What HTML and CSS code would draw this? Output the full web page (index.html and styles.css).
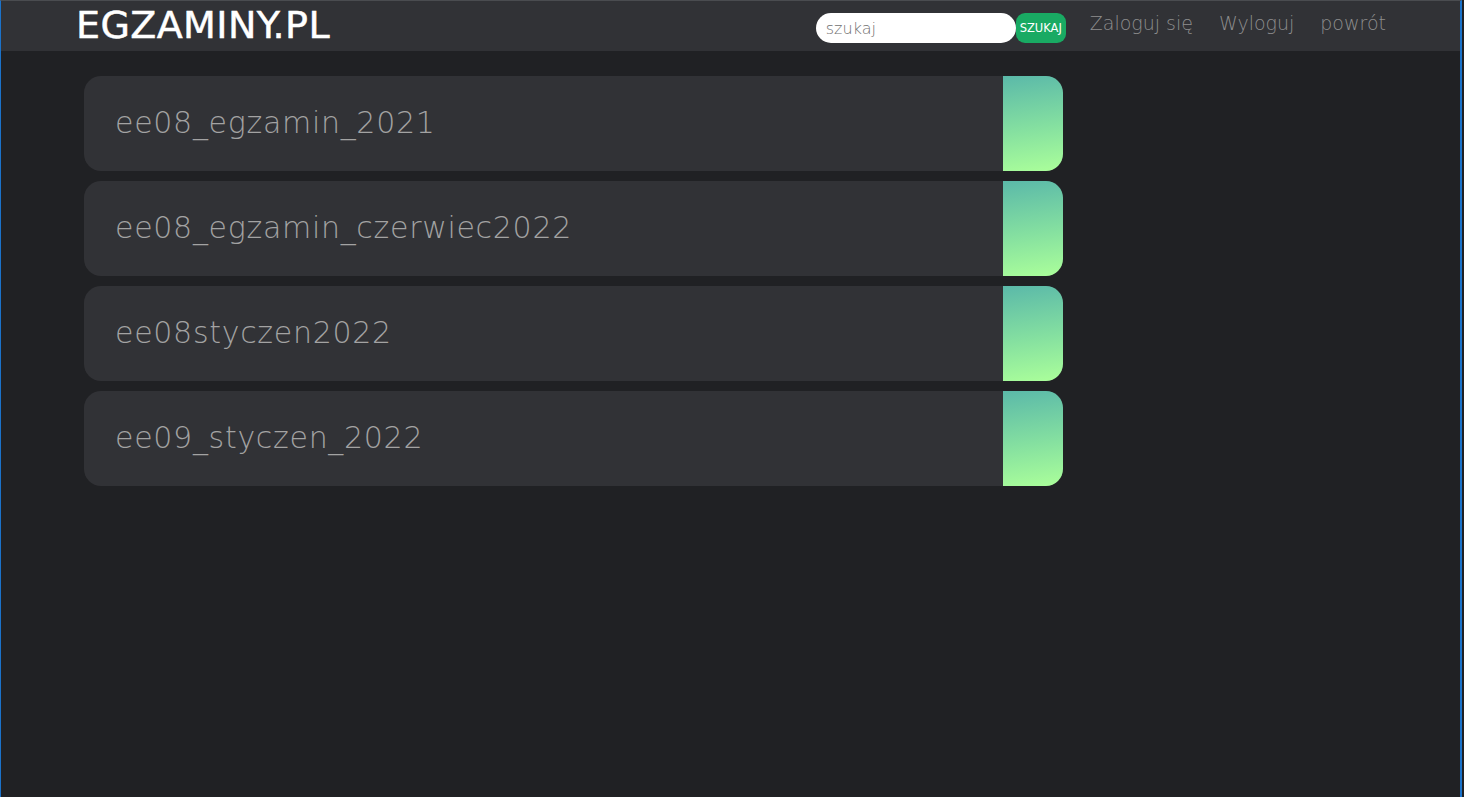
FILE: index.html
```html
<!DOCTYPE html>
<html lang="pl">
<head>
<meta charset="utf-8">
<title>EGZAMINY.PL</title>
<link rel="stylesheet" href="styles.css">
</head>
<body>
<div class="frame">
  <header class="topbar">
    <a class="logo" href="#">EGZAMINY.PL</a>
    <div class="right">
      <form class="search">
        <input class="search-input" type="text" placeholder="szukaj">
        <button class="search-btn" type="button">SZUKAJ</button>
      </form>
      <nav class="nav">
        <a href="#">Zaloguj się</a>
        <a href="#">Wyloguj</a>
        <a href="#">powrót</a>
      </nav>
    </div>
  </header>
  <main class="list">
    <a class="card" href="#"><span class="card-title">ee08_egzamin_2021</span><span class="card-tab"></span></a>
    <a class="card" href="#"><span class="card-title">ee08_egzamin_czerwiec2022</span><span class="card-tab"></span></a>
    <a class="card" href="#"><span class="card-title">ee08styczen2022</span><span class="card-tab"></span></a>
    <a class="card" href="#"><span class="card-title">ee09_styczen_2022</span><span class="card-tab"></span></a>
  </main>
</div>
</body>
</html>
```
FILE: styles.css
```css
* { box-sizing: border-box; }
html, body {
  margin: 0;
  padding: 0;
  background: #202124;
  height: 100%;
}
body {
  font-family: "DejaVu Sans", "Noto Sans", sans-serif;
}
.frame {
  width: 1462px;
  height: 797px;
  border-left: 1px solid #1b72c9;
  border-right: 2px solid #1b72c9;
  border-top: 1px solid #4a4c50;
  background: #202124;
}
.topbar {
  height: 50px;
  background: #313236;
  display: flex;
  align-items: center;
  justify-content: space-between;
  padding: 0 74px 0 75px;
}
.logo {
  color: #ffffff;
  text-decoration: none;
  font-size: 38px;
  font-weight: 500;
  letter-spacing: 0.4px;
  line-height: 1;
  margin-top: -2px;
  -webkit-text-stroke: 0.5px #ffffff;
}
.right {
  display: flex;
  align-items: center;
  gap: 24px;
}
.search {
  display: flex;
  align-items: center;
  margin: 4px 0 0 0;
}
.search-input {
  width: 200px;
  height: 30px;
  border: none;
  border-radius: 15px;
  background: #ffffff;
  padding: 0 10px;
  font-family: "DejaVu Sans", sans-serif;
  font-size: 16px;
  font-weight: 300;
  color: #333;
  outline: none;
}
.search-input::placeholder { color: #6f6f6f; }
.search-btn {
  width: 50px;
  height: 30px;
  border: none;
  border-radius: 9px;
  background: #19aa63;
  color: #ffffff;
  font-family: "DejaVu Sans", sans-serif;
  font-size: 11.5px;
  padding: 0;
  margin-left: 0;
}
.nav {
  display: flex;
  gap: 26px;
  margin-top: -6px;
}
.nav a {
  color: #8e8e8e;
  text-decoration: none;
  font-size: 19px;
  font-weight: 300;
}
.list {
  display: flex;
  flex-direction: column;
  gap: 10px;
  padding: 25px 0 0 83px;
}
.card {
  width: 979px;
  height: 95px;
  display: grid;
  grid-template-columns: 1fr 60px;
  border-radius: 17px;
  overflow: hidden;
  background: #313236;
  text-decoration: none;
}
.card-title {
  align-self: center;
  padding-left: 31px;
  padding-bottom: 3px;
  color: #a3a3a3;
  font-size: 30px;
  font-weight: 200;
  letter-spacing: 0.7px;
}
.card-tab {
  background: linear-gradient(172deg, #5bb9a9 0%, #85e0a0 55%, #abff9a 100%);
}
```
